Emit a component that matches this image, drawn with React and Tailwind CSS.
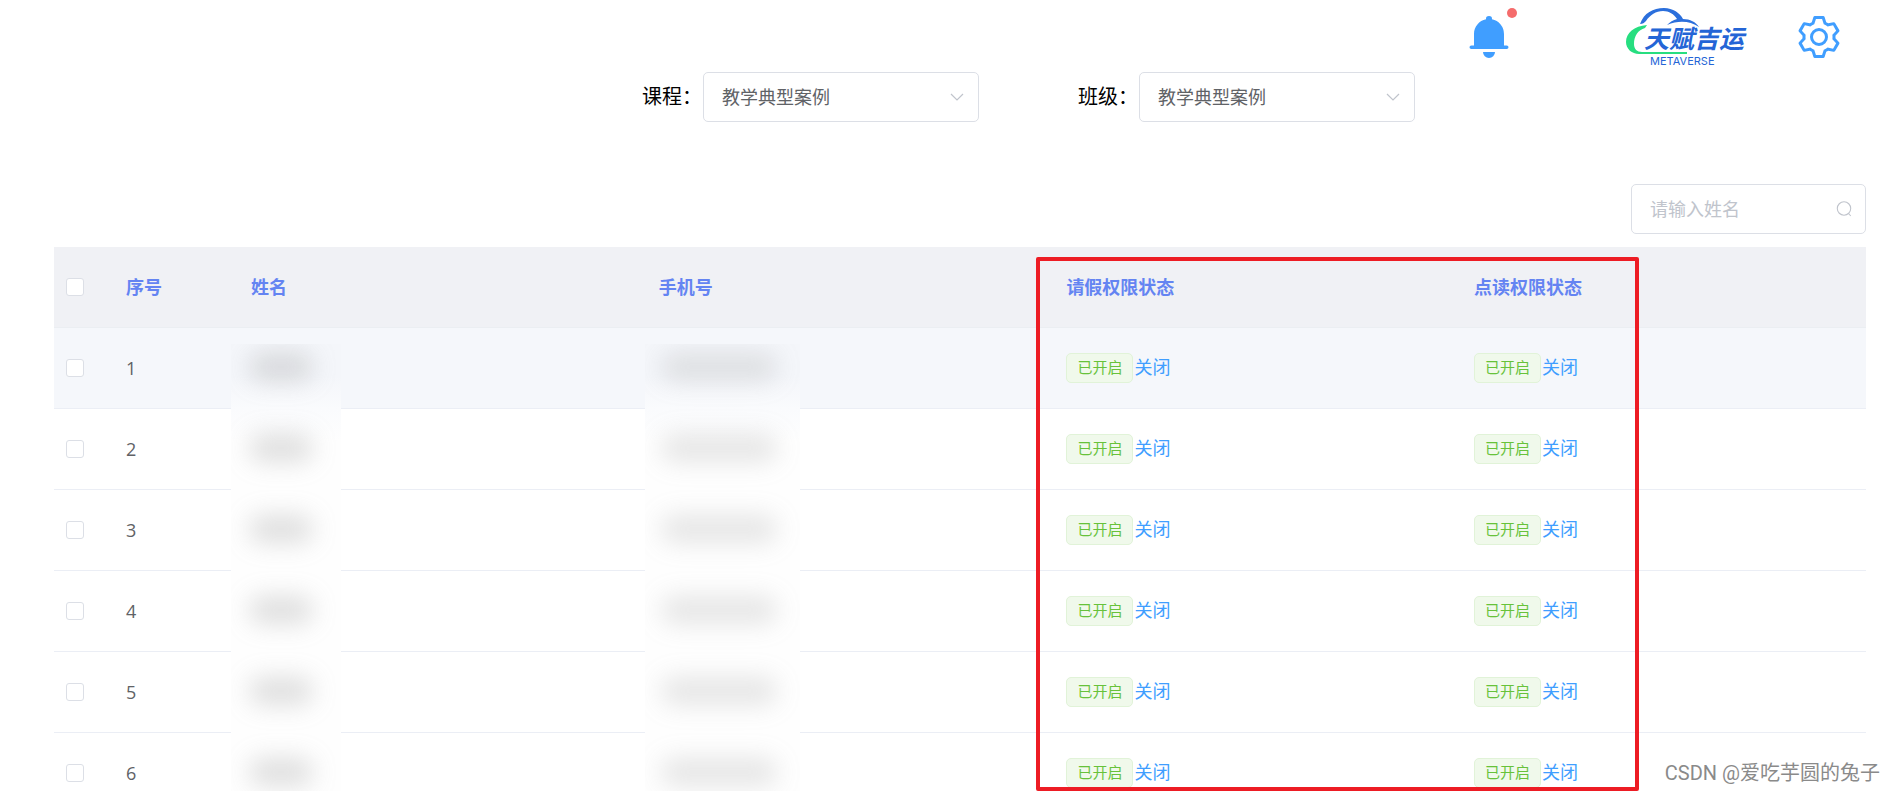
import { useState } from "react";
import clsx from "clsx";

const students = [
  { id: 1, leave: "已开启", reading: "已开启" },
  { id: 2, leave: "已开启", reading: "已开启" },
  { id: 3, leave: "已开启", reading: "已开启" },
  { id: 4, leave: "已开启", reading: "已开启" },
  { id: 5, leave: "已开启", reading: "已开启" },
  { id: 6, leave: "已开启", reading: "已开启" },
];

function BellIcon() {
  return (
    <svg viewBox="0 0 1024 1024" className="size-12" fill="currentColor" aria-hidden="true">
      <path d="M640 832a128 128 0 0 1-256 0h256zm192-64H134.4a38.4 38.4 0 0 1 0-76.8H192V448c0-154.88 110.08-284.16 256.32-313.6a64 64 0 1 1 127.36 0A320.128 320.128 0 0 1 832 448v243.2h57.6a38.4 38.4 0 0 1 0 76.8H832z" />
    </svg>
  );
}

function SettingIcon() {
  return (
    <svg viewBox="0 0 1024 1024" className="size-12" fill="currentColor" aria-hidden="true">
      <path d="M600.704 64a32 32 0 0 1 30.464 22.208l35.2 109.376c14.784 7.232 28.928 15.36 42.432 24.512l112.384-24.192a32 32 0 0 1 34.432 15.36L944.32 364.8a32 32 0 0 1-4.032 37.504l-77.12 85.12a357.12 357.12 0 0 1 0 49.024l77.12 85.248a32 32 0 0 1 4.032 37.504l-88.704 153.6a32 32 0 0 1-34.432 15.296L708.8 803.904c-13.44 9.088-27.648 17.28-42.368 24.512l-35.264 109.376A32 32 0 0 1 600.704 960H423.296a32 32 0 0 1-30.464-22.208L357.696 828.48a351.616 351.616 0 0 1-42.56-24.64l-112.32 24.256a32 32 0 0 1-34.432-15.36L79.68 659.2a32 32 0 0 1 4.032-37.504l77.12-85.248a357.12 357.12 0 0 1 0-48.896l-77.12-85.248A32 32 0 0 1 79.68 364.8l88.704-153.6a32 32 0 0 1 34.432-15.296l112.32 24.256c13.568-9.152 27.776-17.408 42.56-24.64l35.2-109.312A32 32 0 0 1 423.232 64H600.64zm-23.424 64H446.72l-36.352 113.088-24.512 11.968a294.113 294.113 0 0 0-34.816 20.096l-22.656 15.36-116.224-25.088-65.28 113.152 79.68 88.192-1.92 27.136a293.12 293.12 0 0 0 0 40.192l1.92 27.136-79.808 88.192 65.344 113.152 116.224-25.024 22.656 15.296a294.113 294.113 0 0 0 34.816 20.096l24.512 11.968L446.72 896h130.688l36.48-113.152 24.448-11.904a288.282 288.282 0 0 0 34.752-20.096l22.592-15.296 116.288 25.024 65.28-113.152-79.744-88.192 1.92-27.136a293.12 293.12 0 0 0 0-40.256l-1.92-27.136 79.808-88.128-65.344-113.152-116.288 24.96-22.592-15.232a287.616 287.616 0 0 0-34.752-20.096l-24.448-11.904L577.344 128zM512 320a192 192 0 1 1 0 384 192 192 0 0 1 0-384zm0 64a128 128 0 1 0 0 256 128 128 0 0 0 0-256z" />
    </svg>
  );
}

function Logo() {
  return (
    <svg viewBox="0 0 122 60" className="h-[60px] w-[122px]" role="img" aria-label="天赋吉运 METAVERSE">
      <path
        d="M15 17C19 6 28 1 39 1c9 0 16 5 19 11 7 0 13 3 16 8-9-6-20-7-32-2 3-3 6-5 10-6-3-5-8-8-14-8-7 0-13 4-17 10-2 2-3 3-6 3Z"
        fill="#2b6fdc"
      />
      <path
        d="M22 18C9 19 1 26 1 35c0 7 6 12 13 12h48v-2H17c-5 0-8-3-8-8 0-8 4-14 11-16Z"
        fill="#27de80"
      />
      <text
        x="19"
        y="41"
        fontSize="25"
        fontWeight="700"
        fontStyle="italic"
        fontFamily="'Noto Sans CJK SC', sans-serif"
        fill="#2465d6"
      >
        天赋吉运
      </text>
      <text x="25" y="58" fontSize="11" fontFamily="Inter, sans-serif" fill="#2465d6">
        METAVERSE
      </text>
    </svg>
  );
}

function Filter({ id, label }) {
  return (
    <div className="flex items-center gap-px">
      <label htmlFor={id} className="text-xl text-black">
        {label}
      </label>
      <div className="relative">
        <select
          id={id}
          className="h-[50px] w-[276px] appearance-none rounded-[5px] border border-[#dcdfe6] bg-white px-[18px] text-lg text-[#606266] outline-none"
        >
          <option>教学典型案例</option>
        </select>
        <svg
          viewBox="0 0 14 14"
          className="pointer-events-none absolute top-[18px] right-[15px] size-3.5"
          fill="none"
          stroke="#c0c4cc"
          strokeWidth="1.2"
          aria-hidden="true"
        >
          <path d="m1 4 6 6 6-6" />
        </svg>
      </div>
    </div>
  );
}

function Checkbox({ label }) {
  return (
    <input
      type="checkbox"
      aria-label={label}
      className="block size-[18px] appearance-none rounded-[3px] border border-[#dcdfe6] bg-white checked:bg-[#409eff]"
    />
  );
}

// Smudge that hides personal data in a cell
function Redacted({ row, wide }) {
  return (
    <div
      className={clsx(
        "absolute -bottom-px overflow-hidden bg-linear-to-b",
        wide ? "-left-1 w-[155px]" : "-left-2.5 w-[110px]",
        row === 1 && "top-4 from-[#f4f6fa] from-50% to-[#fafbfd]",
        row === 2 && "top-0 from-[#fafbfd] to-[#fefefe] to-40%",
        row > 2 && "top-0 from-[#fefefe] to-[#fefefe]",
      )}
    >
      <div
        className={clsx(
          "absolute bottom-7 h-7 rounded-full blur-[12px]",
          wide ? "left-4 w-[116px] bg-[#808080]/20" : "left-[18px] w-16 bg-[#808080]/25",
        )}
      />
    </div>
  );
}

function Permission({ status }) {
  return (
    <div className="flex items-center gap-px">
      <span className="flex h-[30px] items-center rounded-[5px] border border-[#e1f3d8] bg-[#f0f9eb] px-2.5 text-[15px] text-[#67c23a]">
        {status}
      </span>
      <button type="button" className="pb-0.5 text-lg text-[#409eff]">
        关闭
      </button>
    </div>
  );
}

export default function App() {
  const [keyword, setKeyword] = useState("");

  return (
    <main className="relative h-screen overflow-hidden bg-white font-['Open_Sans','Noto_Sans_CJK_SC',sans-serif] text-[#606266]">
      <header className="flex h-[72px] items-start justify-end pr-[52px]">
        <button type="button" aria-label="消息" className="relative mt-[13px] mr-28 text-[#409eff]">
          <BellIcon />
          <span className="absolute -top-[5px] -right-1 size-2.5 rounded-full bg-[#f56c6c]" />
        </button>
        <div className="mt-[7px] mr-12">
          <Logo />
        </div>
        <button type="button" aria-label="设置" className="mt-[13px] text-[#409eff]">
          <SettingIcon />
        </button>
      </header>

      <div className="flex justify-center gap-[99px] pl-[162px]">
        <Filter id="course" label="课程：" />
        <Filter id="class" label="班级：" />
      </div>

      <section className="mt-[62px] pr-[29px] pl-[54px]">
        <div className="flex justify-end">
          <div className="relative">
            <input
              type="text"
              aria-label="姓名"
              placeholder="请输入姓名"
              value={keyword}
              onChange={(e) => setKeyword(e.target.value)}
              className="block h-[50px] w-[235px] rounded-[5px] border border-[#dcdfe6] pr-10 pl-[18px] text-lg outline-none placeholder:text-[#c0c4cc]"
            />
            <svg
              viewBox="0 0 16 16"
              className="pointer-events-none absolute top-[17px] right-3.5 size-4"
              fill="none"
              stroke="#c0c4cc"
              strokeWidth="1.1"
              aria-hidden="true"
            >
              <circle cx="8" cy="7.5" r="6.7" />
              <path d="m12.5 12.5 2.3 2.5" />
            </svg>
          </div>
        </div>

        <div className="relative mt-[13px]">
          <table className="w-full table-fixed border-separate border-spacing-0 text-left text-lg">
            <colgroup>
              <col className="w-[62px]" />
              <col className="w-[125px]" />
              <col className="w-[22.5%]" />
              <col className="w-[22.5%]" />
              <col className="w-[22.5%]" />
              <col />
            </colgroup>
            <thead className="bg-[#f0f1f5] text-[#6484f2]">
              <tr className="*:h-[81px] *:border-b *:border-[#ebeef2] *:px-2.5 *:pb-px *:font-bold">
                <th className="pl-3!">
                  <Checkbox label="全选" />
                </th>
                <th>序号</th>
                <th>姓名</th>
                <th>手机号</th>
                <th>请假权限状态</th>
                <th>点读权限状态</th>
              </tr>
            </thead>
            <tbody>
              {students.map((s) => (
                <tr
                  key={s.id}
                  className={clsx(
                    "*:h-[81px] *:border-b *:border-[#ebeef5] *:px-2.5 *:pb-px",
                    s.id === 1 && "bg-[#f5f7fb]",
                  )}
                >
                  <td className="pl-3!">
                    <Checkbox label={`选择第${s.id}行`} />
                  </td>
                  <td>{s.id}</td>
                  <td className="relative">
                    <Redacted row={s.id} />
                  </td>
                  <td className="relative">
                    <Redacted row={s.id} wide />
                  </td>
                  <td>
                    <Permission status={s.leave} />
                  </td>
                  <td>
                    <Permission status={s.reading} />
                  </td>
                </tr>
              ))}
            </tbody>
          </table>

          {/* highlight around the two permission columns */}
          <div className="pointer-events-none absolute top-2.5 left-[54.2%] h-[534px] w-[33.3%] rounded-[2px] border-4 border-[#ed1c24]" />
        </div>
      </section>

      <p className="absolute right-[15px] bottom-1 font-[Roboto,'Noto_Sans_CJK_SC',sans-serif] text-xl text-[#8a8a8a]">
        CSDN @爱吃芋圆的兔子
      </p>
    </main>
  );
}
